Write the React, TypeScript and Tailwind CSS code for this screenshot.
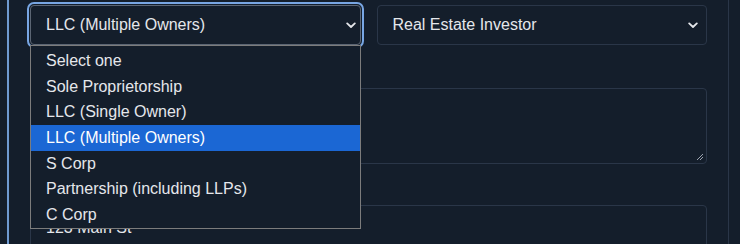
import React from "react";

const Chevron = () => (
  <svg width="10" height="7" viewBox="0 0 10 7" className="shrink-0">
    <path d="M1.2 1.4 L5 5 L8.8 1.4" fill="none" stroke="#e5e7eb" strokeWidth="1.8" strokeLinecap="round" strokeLinejoin="round" />
  </svg>
);

const options = [
  "Select one",
  "Sole Proprietorship",
  "LLC (Single Owner)",
  "LLC (Multiple Owners)",
  "S Corp",
  "Partnership (including LLPs)",
  "C Corp",
];

export default function App() {
  return (
    <div
      className="w-[740px] h-[244px] bg-[#141e2b] overflow-hidden flex text-[#e5e7eb]"
      style={{ fontFamily: '"Liberation Sans", Arial, sans-serif' }}
    >
      <div className="w-[7px] shrink-0" />
      <div className="w-[2px] shrink-0 bg-[#6f9bd2]" />
      <div className="w-[21px] shrink-0" />
      <div className="w-[677px] shrink-0 pt-[5px] flex flex-col">
        <div className="grid grid-cols-2 gap-[16px]">
          <div className="relative">
            <div className="h-[40px] rounded-[4px] border border-[#5b6573] outline-2 outline-offset-1 outline-[#78a6e3] flex items-center justify-between pl-[15px] pr-[4px] text-[16px]">
              <span>LLC (Multiple Owners)</span>
              <Chevron />
            </div>
            <div className="absolute left-0 top-[40px] w-[331px] h-[184px] z-10 border border-[#7c7c7c] bg-[#141e2b] pt-[2px] text-[16px]">
              {options.map((o) => (
                <div
                  key={o}
                  className={
                    "h-[25.7px] flex items-center pl-[15px] " +
                    (o === "LLC (Multiple Owners)" ? "bg-[#1b67d4] text-white" : "")
                  }
                >
                  {o}
                </div>
              ))}
            </div>
          </div>
          <div className="h-[40px] rounded-[4px] border border-[#2a3648] flex items-center justify-between pl-[15px] pr-[8px] text-[16px]">
            <span>Real Estate Investor</span>
            <Chevron />
          </div>
        </div>
        <div className="h-[43px] shrink-0" />
        <div className="h-[76px] shrink-0 rounded-[4px] border border-[#2a3648] relative">
          <svg width="8" height="8" viewBox="0 0 8 8" className="absolute right-[2px] bottom-[2px]">
            <path d="M7 1 L1 7 M7 4 L4 7" stroke="#9ca3af" strokeWidth="1" />
          </svg>
        </div>
        <div className="h-[41px] shrink-0" />
        <div className="h-[46px] shrink-0 rounded-[4px] border border-[#2a3648] flex items-center pl-[15px] text-[16px]">
          123 Main St
        </div>
      </div>
      <div className="w-[21px] shrink-0" />
      <div className="w-[1px] shrink-0 bg-[#2a3648]" />
    </div>
  );
}
